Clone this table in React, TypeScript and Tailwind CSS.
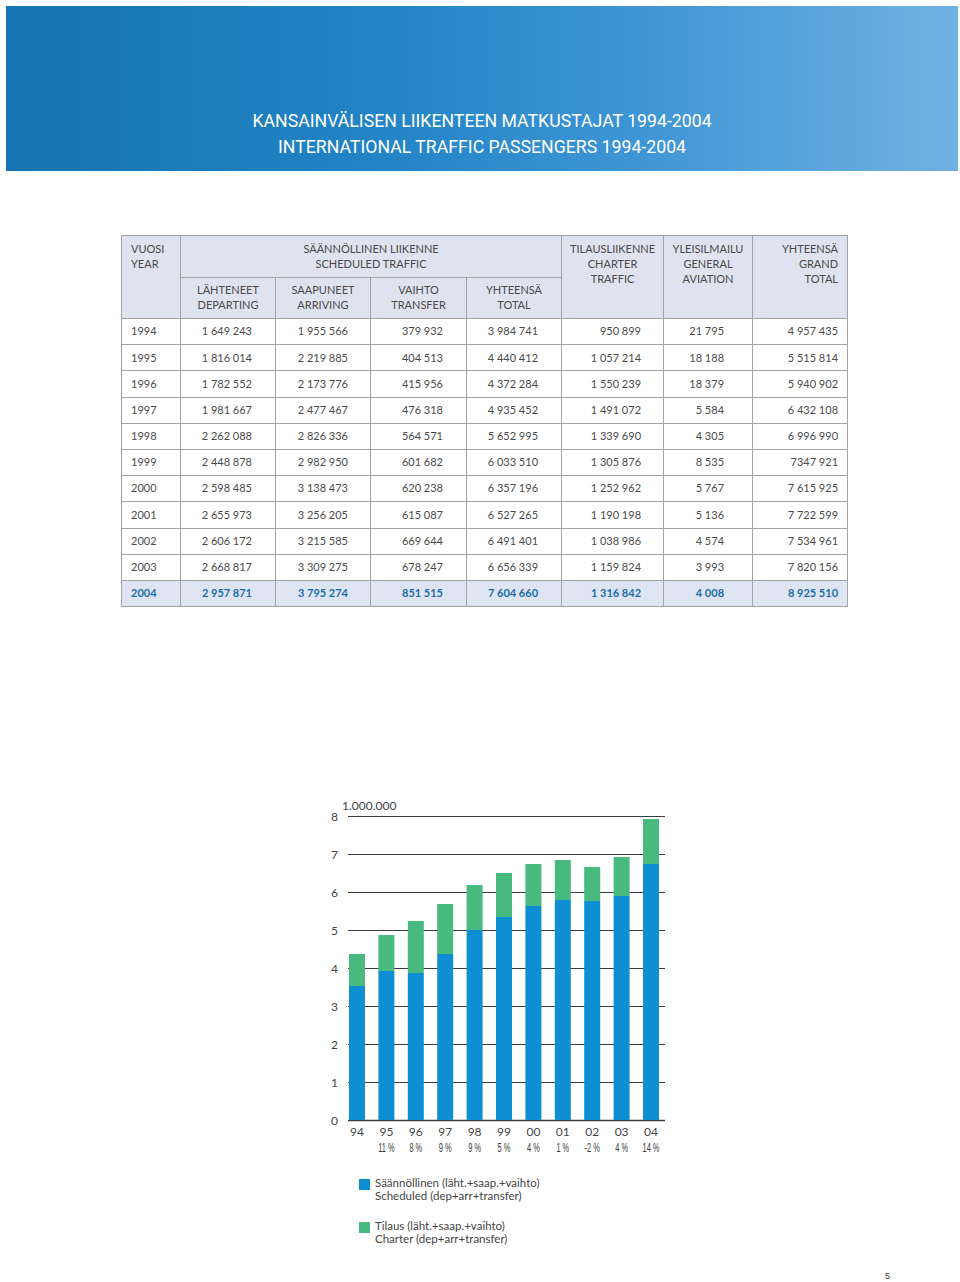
import React from "react";

const rows: string[][] = [
  ["1994", "1 649 243", "1 955 566", "379 932", "3 984 741", "950 899", "21 795", "4 957 435"],
  ["1995", "1 816 014", "2 219 885", "404 513", "4 440 412", "1 057 214", "18 188", "5 515 814"],
  ["1996", "1 782 552", "2 173 776", "415 956", "4 372 284", "1 550 239", "18 379", "5 940 902"],
  ["1997", "1 981 667", "2 477 467", "476 318", "4 935 452", "1 491 072", "5 584", "6 432 108"],
  ["1998", "2 262 088", "2 826 336", "564 571", "5 652 995", "1 339 690", "4 305", "6 996 990"],
  ["1999", "2 448 878", "2 982 950", "601 682", "6 033 510", "1 305 876", "8 535", "7347 921"],
  ["2000", "2 598 485", "3 138 473", "620 238", "6 357 196", "1 252 962", "5 767", "7 615 925"],
  ["2001", "2 655 973", "3 256 205", "615 087", "6 527 265", "1 190 198", "5 136", "7 722 599"],
  ["2002", "2 606 172", "3 215 585", "669 644", "6 491 401", "1 038 986", "4 574", "7 534 961"],
  ["2003", "2 668 817", "3 309 275", "678 247", "6 656 339", "1 159 824", "3 993", "7 820 156"],
  ["2004", "2 957 871", "3 795 274", "851 515", "7 604 660", "1 316 842", "4 008", "8 925 510"],
];

// pixel heights measured from the chart (38px = 1 million)
const bars = [
  { y: "94", b: 134, g: 32, p: "" },
  { y: "95", b: 149, g: 36, p: "11 %" },
  { y: "96", b: 147, g: 52, p: "8 %" },
  { y: "97", b: 166, g: 50, p: "9 %" },
  { y: "98", b: 190, g: 45, p: "9 %" },
  { y: "99", b: 203, g: 44, p: "5 %" },
  { y: "00", b: 214, g: 42, p: "4 %" },
  { y: "01", b: 220, g: 40, p: "1 %" },
  { y: "02", b: 219, g: 34, p: "-2 %" },
  { y: "03", b: 224, g: 39, p: "4 %" },
  { y: "04", b: 256, g: 45, p: "14 %" },
];

const cellAlign = [
  "text-left pl-[9px]",
  "text-right pr-[23px]",
  "text-right pr-[22px]",
  "text-right pr-[23px]",
  "text-right pr-[23px]",
  "text-right pr-[22px]",
  "text-right pr-[28px]",
  "text-right pr-[9px]",
];

const Chart = () => {
  const base = 324;
  return (
    <svg width="350" height="362" className="block ml-[320px] mt-[189px]" style={{ fontFamily: "Lato, sans-serif" }}>
      {[0, 1, 2, 3, 4, 5, 6, 7, 8].map((v) => (
        <g key={v}>
          <line x1="28" x2="345" y1={base - 38 * v + 0.5} y2={base - 38 * v + 0.5} stroke="#3c3c3c" strokeWidth={v === 0 ? 1.4 : 1} />
          <text x="18" y={base - 38 * v + 4.5} fontSize="12" fill="#444" textAnchor="end">{v}</text>
        </g>
      ))}
      <text x="22" y="14" fontSize="12" fill="#444">1.000.000</text>
      {bars.map((d, i) => {
        const x = 29 + i * 29.4;
        return (
          <g key={d.y}>
            <rect x={x} y={base - d.b} width="16" height={d.b} fill="#0e8fd3" />
            <rect x={x} y={base - d.b - d.g} width="16" height={d.g} fill="#48b97f" />
            <text x={x + 8} y="340" fontSize="12" fill="#444" textAnchor="middle">{d.y}</text>
            {d.p && (
              <g transform={`translate(${x + 8} 356) scale(0.62 1)`}>
                <text x="0" y="0" fontSize="12" fill="#3a3a3a" textAnchor="middle" style={{ fontFamily: "'Liberation Sans', sans-serif" }}>
                  {d.p}
                </text>
              </g>
            )}
          </g>
        );
      })}
    </svg>
  );
};

export default function App() {
  return (
    <div className="w-[960px] h-[1282px] bg-white overflow-hidden" style={{ fontFamily: "Lato, 'Open Sans', sans-serif" }}>
      <div className="ml-[6px] mt-[6px] w-[952px] h-[165px] bg-[linear-gradient(90deg,#1575b2_0%,#2384c6_40%,#3d94d4_65%,#62a9de_90%,#6fb2e2_100%)] pt-[102px] text-center text-white text-[17.7px] leading-[26px]" style={{ fontFamily: "Roboto, 'Liberation Sans', sans-serif" }}>
        <div>KANSAINVÄLISEN LIIKENTEEN MATKUSTAJAT 1994-2004</div>
        <div>INTERNATIONAL TRAFFIC PASSENGERS 1994-2004</div>
      </div>

      <table className="ml-[121px] mt-[64px] w-[726px] table-fixed border-collapse text-[11px] text-[#4a4a4a]">
        <colgroup>
          <col className="w-[59px]" />
          <col className="w-[95px]" />
          <col className="w-[95px]" />
          <col className="w-[96px]" />
          <col className="w-[95px]" />
          <col className="w-[102px]" />
          <col className="w-[89px]" />
          <col className="w-[95px]" />
        </colgroup>
        <thead className="bg-[#dfe3f0] leading-[15px]">
          <tr className="h-[42px]">
            <th rowSpan={2} className="border border-[#a3a3a3] align-top text-left font-normal pl-[9px] pt-[5px]">VUOSI<br />YEAR</th>
            <th colSpan={4} className="border border-[#a3a3a3] align-top font-normal pt-[5px]">SÄÄNNÖLLINEN LIIKENNE<br />SCHEDULED TRAFFIC</th>
            <th rowSpan={2} className="border border-[#a3a3a3] align-top font-normal pt-[5px]">TILAUSLIIKENNE<br />CHARTER<br />TRAFFIC</th>
            <th rowSpan={2} className="border border-[#a3a3a3] align-top font-normal pt-[5px]">YLEISILMAILU<br />GENERAL<br />AVIATION</th>
            <th rowSpan={2} className="border border-[#a3a3a3] align-top text-right font-normal pr-[9px] pt-[5px]">YHTEENSÄ<br />GRAND<br />TOTAL</th>
          </tr>
          <tr className="h-[41px]">
            <th className="border border-[#a3a3a3] align-top font-normal pt-[4px]">LÄHTENEET<br />DEPARTING</th>
            <th className="border border-[#a3a3a3] align-top font-normal pt-[4px]">SAAPUNEET<br />ARRIVING</th>
            <th className="border border-[#a3a3a3] align-top font-normal pt-[4px]">VAIHTO<br />TRANSFER</th>
            <th className="border border-[#a3a3a3] align-top font-normal pt-[4px]">YHTEENSÄ<br />TOTAL</th>
          </tr>
        </thead>
        <tbody>
          {rows.map((r, ri) => {
            const last = ri === rows.length - 1;
            return (
              <tr key={r[0]} className={last ? "h-[26.2px] bg-[#dee4f1] text-[#1b6dac] font-bold" : "h-[26.2px]"}>
                {r.map((c, ci) => (
                  <td key={ci} className={`border border-[#a3a3a3] p-0 ${cellAlign[ci]}`}>{c}</td>
                ))}
              </tr>
            );
          })}
        </tbody>
      </table>

      <Chart />

      <div className="ml-[359px] mt-[18px] text-[11.5px] leading-[13px] text-[#444]">
        <div className="flex items-start gap-[5px]">
          <span className="mt-[3px] w-[11px] h-[11px] bg-[#0e8fd3]" />
          <div>Säännöllinen (läht.+saap.+vaihto)<br />Scheduled (dep+arr+transfer)</div>
        </div>
        <div className="flex items-start gap-[5px] mt-[17px]">
          <span className="mt-[3px] w-[11px] h-[11px] bg-[#48b97f]" />
          <div>Tilaus (läht.+saap.+vaihto)<br />Charter (dep+arr+transfer)</div>
        </div>
      </div>

      <div className="ml-[885px] mt-[26px] text-[9px] leading-[10px] text-[#333]" style={{ fontFamily: "'Liberation Sans', sans-serif" }}>5</div>
    </div>
  );
}
